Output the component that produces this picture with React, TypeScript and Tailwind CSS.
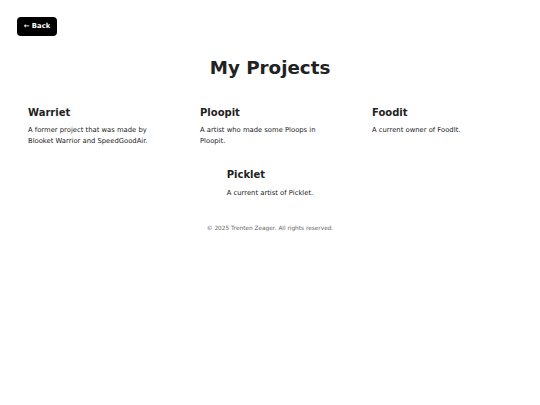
import React from "react";

const projects = [
  { name: "Warriet", desc: "A former project that was made by Blooket Warrior and SpeedGoodAir." },
  { name: "Ploopit", desc: "A artist who made some Ploops in Ploopit." },
  { name: "Foodit", desc: "A current owner of FoodIt." },
];

function Card({ name, desc }: { name: string; desc: string }) {
  return (
    <div>
      <h2 className="text-[10px] leading-[10px] font-bold text-[#222]">{name}</h2>
      <p className="mt-[6.5px] max-w-[125px] text-[6.8px] leading-[11.5px] text-[#222]">{desc}</p>
    </div>
  );
}

export default function App() {
  return (
    <div className="w-[540px] min-h-[405px] bg-white font-['DejaVu_Sans',sans-serif]">
      <div className="pt-[17px] pl-[17px]">
        <button className="flex h-[19px] w-[40px] items-center justify-center rounded-[4px] bg-black text-[6.8px] font-bold text-white">
          ← Back
        </button>
      </div>
      <h1 className="mt-[22.5px] text-center text-[18.3px] leading-none font-bold text-[#222]">My Projects</h1>
      <div className="mt-[31.4px] grid grid-cols-3 gap-x-[32px] px-[28px]">
        {projects.map((p) => (
          <Card key={p.name} name={p.name} desc={p.desc} />
        ))}
      </div>
      <div className="mt-[21.9px] flex justify-center">
        <div>
          <h2 className="text-[10px] leading-[10px] font-bold text-[#222]">Picklet</h2>
          <p className="mt-[8px] text-[6.8px] leading-[11.5px] text-[#222]">A current artist of Picklet.</p>
        </div>
      </div>
      <footer className="mt-[24.8px] text-center text-[5.8px] leading-[8px] text-[#666]">
        © 2025 Trenten Zeager. All rights reserved.
      </footer>
    </div>
  );
}
